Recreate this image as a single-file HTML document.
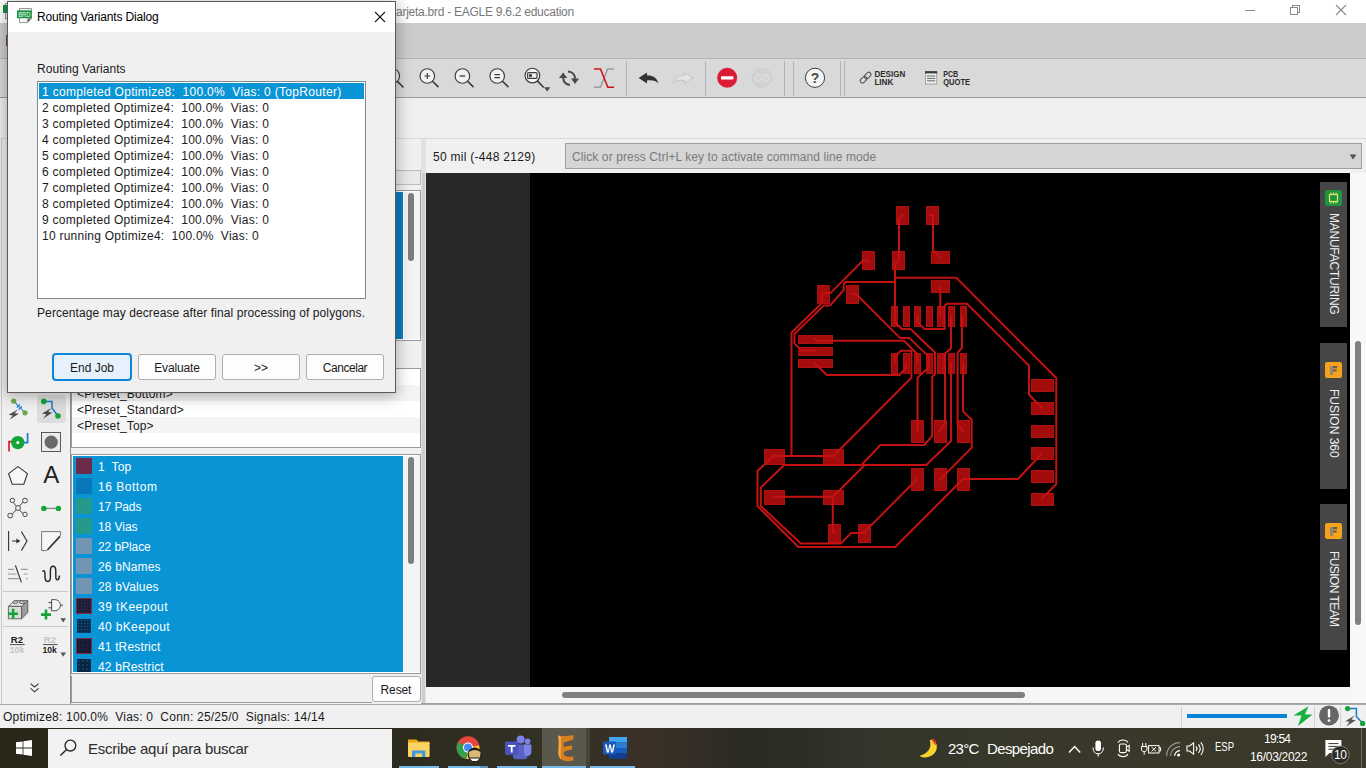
<!DOCTYPE html>
<html>
<head>
<meta charset="utf-8">
<title>EAGLE</title>
<style>
*{box-sizing:border-box;margin:0;padding:0}
html,body{width:1366px;height:768px;overflow:hidden;background:#f0f0f0;font-family:"Liberation Sans",sans-serif;font-size:12px;color:#000}
.abs{position:absolute}
.t{position:absolute;white-space:pre;line-height:1}
#titlebar{left:0;top:0;width:1366px;height:23px;background:#fff}
#menubar{left:0;top:23px;width:1366px;height:36px;background:#cccccc;border-bottom:1px solid #b4b4b4}
#toolbar{left:0;top:59px;width:1366px;height:39px;background:#d9d9d9;border-bottom:1px solid #9a9a9a}
#parambar{left:0;top:98px;width:1366px;height:41px;background:#efefef;border-bottom:1px solid #dadada}
#canvas{left:426px;top:173px;width:924px;height:514px;background:#000}
#canvasgray{left:426px;top:173px;width:104px;height:514px;background:#282828}
#statusbar{left:0;top:704px;width:1366px;height:24px;background:#f0f0f0;border-top:1px solid #a8a8a8}
#taskbar{left:0;top:728px;width:1366px;height:40px;background:linear-gradient(90deg,#2a2618 0px,#2d2b1e 400px,#333024 540px,#3a3027 640px,#362e26 690px,#2b2b23 740px,#2c2d24 800px,#33352a 860px,#37372a 1000px,#3a3829 1200px,#3b392b 1366px)}
.vt{transform-origin:0 0;transform:rotate(90deg);font-size:12px;color:#f0f0f0}
.btn{top:362px;text-align:center;font-size:12px;color:#1a1a1a}
.sep{position:absolute;top:65px;width:1px;height:28px;background:#b9b9b9}
</style>
</head>
<body>
<!-- MAIN WINDOW -->
<div id="titlebar" class="abs"></div>
<div id="menubar" class="abs"></div>
<div id="toolbar" class="abs"></div>
<div id="parambar" class="abs"></div>
<div id="canvas" class="abs"></div>
<div id="canvasgray" class="abs"></div>
<div id="statusbar" class="abs"></div>
<div id="taskbar" class="abs"></div>
<!-- title text + window controls -->
<div class="t" style="left:396px;top:6px;font-size:12px;letter-spacing:-0.26px;color:#787878">arjeta.brd - EAGLE 9.6.2 education</div>
<svg class="abs" style="left:0;top:0" width="1366" height="140" viewBox="0 0 1366 140">
 <!-- window controls -->
 <g stroke="#8a8a8a" stroke-width="1" fill="none" shape-rendering="crispEdges">
  <line x1="1245" y1="10.5" x2="1255" y2="10.5"/>
  <rect x="1290.5" y="7.5" width="7" height="7"/>
  <path d="M1292.5 7.5V5.5H1299.5V12.5H1297.5"/>
 </g>
 <g stroke="#8a8a8a" stroke-width="1.1" fill="none">
  <path d="M1336 5L1346 15M1346 5L1336 15"/>
 </g>
 <!-- toolbar separators -->
 <g stroke="#b4b4b4" stroke-width="1" shape-rendering="crispEdges">
  <line x1="626.5" y1="61" x2="626.5" y2="96"/>
  <line x1="705.5" y1="61" x2="705.5" y2="96"/>
  <line x1="784.5" y1="61" x2="784.5" y2="96"/>
  <line x1="793.5" y1="61" x2="793.5" y2="96"/>
  <line x1="840.5" y1="61" x2="840.5" y2="96"/>
  <line x1="844.5" y1="61" x2="844.5" y2="96"/>
 </g>
 <!-- magnifiers -->
 <g stroke="#3c3c3c" fill="none" stroke-linecap="round">
  <circle cx="392" cy="76" r="7.5" stroke-width="1.15" fill="#f2f2f2"/>
  <line x1="397.5" y1="81.5" x2="403" y2="87" stroke-width="1.7"/>
  <circle cx="392" cy="76" r="3" stroke-width="1.6"/>
  <circle cx="427.3" cy="76" r="7.3" stroke-width="1.15" fill="#f2f2f2"/>
  <line x1="432.8" y1="81.5" x2="438" y2="86.7" stroke-width="1.7"/>
  <path d="M424.4 76H430.2M427.3 73.1V78.9" stroke-width="1.2" stroke-linecap="butt"/>
  <circle cx="462.4" cy="76" r="7.3" stroke-width="1.15" fill="#f2f2f2"/>
  <line x1="467.9" y1="81.5" x2="473" y2="86.7" stroke-width="1.7"/>
  <path d="M459.6 76H465.2" stroke-width="1.3" stroke-linecap="butt"/>
  <circle cx="497.2" cy="76" r="7.3" stroke-width="1.15" fill="#f2f2f2"/>
  <line x1="502.7" y1="81.5" x2="508" y2="86.7" stroke-width="1.7"/>
  <path d="M494.4 74.6H500M494.4 77.6H500" stroke-width="1.1" stroke-linecap="butt"/>
  <circle cx="532.4" cy="75.6" r="7.3" stroke-width="1.15" fill="#f2f2f2"/>
  <line x1="537.6" y1="81.2" x2="543.2" y2="87" stroke-width="1.7"/>
  <rect x="527.6" y="72.6" width="9.4" height="5.8" rx="1" stroke-width="1.2"/>
  <rect x="529" y="74.2" width="3" height="2.6" fill="#3c3c3c" stroke="none"/>
 </g>
 <path d="M544 87.3H550.4L547.2 91.6Z" fill="#4a4a4a"/>
 <!-- redraw -->
 <g stroke="#484848" stroke-width="2" fill="none">
  <path d="M563.3 77.6C563 81.8 566 84.8 570 85"/>
  <path d="M568 71.4C572.2 71.6 575 74.6 575 78.8"/>
 </g>
 <path d="M559 77.9L563.2 72.5L567.2 77.9Z" fill="#484848"/>
 <path d="M571 78.6H579L575 84Z" fill="#484848"/>
 <!-- X ratsnest icon -->
 <g fill="none" stroke-width="1.6">
  <path d="M594 87.3H600.5L607.6 69H614" stroke="#9c9c9c"/>
  <path d="M594 69H600.5L607.8 87.3H614" stroke="#d41018"/>
 </g>
 <!-- undo / redo -->
 <path d="M638.6 78L647 72.4V75.6C653 75.4 657 78 658.4 83.6C656 80.6 652.6 79.8 647 80.4V83.6Z" fill="#333"/>
 <path d="M692.8 78L684.4 72.4V75.6C678.4 75.4 674.4 78 673 83.6C675.4 80.6 678.8 79.8 684.4 80.4V83.6Z" fill="#e4e4e4" stroke="#bdbdbd" stroke-width="0.8"/>
 <!-- stop -->
 <circle cx="727.2" cy="77.8" r="10" fill="#dc1c36"/>
 <rect x="721" y="76.2" width="12.4" height="3.2" rx="0.6" fill="#fff"/>
 <!-- GO -->
 <circle cx="762" cy="77.8" r="9.8" fill="#d2d2d2" stroke="#cacaca" stroke-width="0.6"/>
 <text x="762" y="81.6" font-family="Liberation Sans" font-size="10" font-weight="bold" fill="#dedede" text-anchor="middle">GO</text>
 <!-- help -->
 <circle cx="815" cy="77.8" r="9.6" fill="#f4f4f4" stroke="#3c3c3c" stroke-width="1"/>
 <text x="815" y="83" font-family="Liberation Sans" font-size="14" font-weight="bold" fill="#4a4a4a" text-anchor="middle">?</text>
 <!-- design link -->
 <g stroke="#5a5a5a" stroke-width="1.1" fill="none">
  <rect x="-3.8" y="-2.2" width="7.4" height="4.4" rx="2.2" transform="translate(863.6 79.6) rotate(-45)"/>
  <rect x="-3.6" y="-2.2" width="7.4" height="4.4" rx="2.2" transform="translate(867.6 75.6) rotate(-45)"/>
 </g>
 <g font-family="Liberation Sans" font-size="8.6" font-weight="bold" fill="#2c2c2c">
  <text x="874.4" y="77.4" textLength="31" lengthAdjust="spacingAndGlyphs">DESIGN</text>
  <text x="874.4" y="85" textLength="19" lengthAdjust="spacingAndGlyphs">LINK</text>
  <text x="943.2" y="77.4" textLength="15" lengthAdjust="spacingAndGlyphs">PCB</text>
  <text x="943.2" y="85" textLength="27" lengthAdjust="spacingAndGlyphs">QUOTE</text>
 </g>
 <!-- pcb quote icon -->
 <rect x="925.4" y="71.6" width="11.4" height="12.4" fill="#ececec" stroke="#8a8a8a" stroke-width="0.7"/>
 <rect x="925" y="71.2" width="12.2" height="2.2" fill="#3c3c3c"/>
 <g stroke="#5a5a5a" stroke-width="0.9"><path d="M927 76H935.2M927 78.4H935.2M927 80.8H935.2"/></g>
</svg>
<!-- coordinate display + command line -->
<div class="t" style="left:433px;top:151px;font-size:12px;letter-spacing:0.28px;color:#1a1a1a">50 mil (-448 2129)</div>
<div class="abs" style="left:565px;top:143px;width:797px;height:26px;background:#d5d5d5;border:1px solid #9f9f9f"></div>
<div class="t" style="left:572px;top:151px;font-size:12px;letter-spacing:0.09px;color:#7a7a7a">Click or press Ctrl+L key to activate command line mode</div>
<svg class="abs" style="left:1349px;top:154px" width="8" height="6"><path d="M0.5 0.5H7.5L4 5.5Z" fill="#555"/></svg>
<!-- LEFT TOOLBAR -->
<div class="abs" style="left:0;top:139px;width:70px;height:565px;background:#f0f0f0"></div>
<div class="abs" style="left:1px;top:139px;width:1px;height:565px;background:#c9c9c9"></div>
<div class="abs" style="left:37px;top:395px;width:29px;height:28px;background:#dcdcdc;border-radius:3px"></div>
<svg class="abs" style="left:0;top:390px" width="72" height="320" viewBox="0 390 72 320">
 <!-- row1 col1 -->
 <line x1="13.7" y1="401" x2="25" y2="412.8" stroke="#3f8fd8" stroke-width="1.2"/>
 <circle cx="13.7" cy="401" r="2.6" fill="#6aa84f"/><circle cx="25" cy="412.8" r="2.6" fill="#6aa84f"/>
 <path d="M16.8 407.6L20 404.4M18.8 409.6L22 406.4" stroke="#1c78d0" stroke-width="1.3"/>
 <path d="M17.8 409.4L8.6 414.8L12.8 415.4L9.4 419.8L18.8 413.8L14.6 413.2Z" fill="#4a4a4a"/>
 <!-- row1 col2 -->
 <path d="M43.8 401.4H52V408L58 416" stroke="#1c78d0" stroke-width="1.5" fill="none"/>
 <circle cx="43.8" cy="401.4" r="2.8" fill="#12a538"/><circle cx="58" cy="416" r="2.8" fill="#12a538"/>
 <path d="M51.4 408L42 413.6L46.4 414.2L43 418.8L52.4 412.6L48.2 412Z" fill="#4a4a4a"/>
 <!-- row2 col1 -->
 <path d="M9 451.5V441.6H13" stroke="#d2222a" stroke-width="1.7" fill="none"/>
 <path d="M27.6 433V442.6H23" stroke="#1c78d0" stroke-width="1.7" fill="none"/>
 <circle cx="17.8" cy="442.6" r="6.7" fill="#12a538"/><circle cx="17.8" cy="442.6" r="1.5" fill="#fff"/>
 <!-- row2 col2 -->
 <rect x="41.5" y="432.5" width="19" height="19" fill="#ececec" stroke="#4a4a4a" stroke-width="0.9"/>
 <circle cx="51.2" cy="442.2" r="6.6" fill="#6a6a6a"/>
 <!-- row3 -->
 <path d="M18 466.6L27.4 473.6L23.8 484.2H12.2L8.6 473.6Z" fill="#f8f8f8" stroke="#333" stroke-width="1.1"/>
 <text x="51.2" y="483.4" font-family="Liberation Sans" font-size="24" fill="#222" text-anchor="middle">A</text>
 <!-- row4 -->
 <g stroke="#4a4a4a" stroke-width="1" fill="#f4f4f4">
  <path d="M12 501L24 515M24 501L10.6 516"/>
  <circle cx="12.4" cy="500.4" r="2.2"/><circle cx="25" cy="500.6" r="2.4"/><circle cx="10.2" cy="515.6" r="2.4"/><circle cx="25" cy="514.4" r="2.2"/><circle cx="18" cy="508" r="2.4"/>
 </g>
 <line x1="43.8" y1="508.4" x2="58.4" y2="508.4" stroke="#8a8a8a" stroke-width="1.4"/>
 <circle cx="43.8" cy="508.4" r="2.7" fill="#12a538"/><circle cx="58.4" cy="508.4" r="2.7" fill="#12a538"/>
 <!-- row5 -->
 <g stroke="#333" stroke-width="1.1" fill="none">
  <path d="M8.6 531V551M12 541H19M21.4 531.6L27 541L21.4 550.6"/>
  <path d="M41.6 531.6H60.6V535L46.6 550.6H41.6Z" fill="#f6f6f6" stroke="#6a6a6a" stroke-width="0.9"/>
  <path d="M47.4 550L60 536.4" stroke-width="1.6"/>
 </g>
 <path d="M16.4 538.4L20.4 541L16.4 543.6Z" fill="#333"/>
 <!-- row6 -->
 <g stroke="#9a9a9a" stroke-width="1.1"><path d="M8 569.4H14M8 574H16.6M8 578.6H19M21 569.4H27.6M23.6 574H27.6M26 578.6H27.6"/></g>
 <path d="M15.4 565.4L21.4 582.4" stroke="#333" stroke-width="1.2"/>
 <path d="M42.6 571.6C43.4 570 45 570.6 45 573.4V577C45 583 50.4 583 50.4 577V571C50.4 564.6 55.8 564.6 55.8 571V577C55.8 581 59 581 59.4 575.6" stroke="#222" stroke-width="1.4" fill="none"/>
 <!-- separators -->
 <line x1="3" y1="591.5" x2="68" y2="591.5" stroke="#c8c8c8"/><line x1="3" y1="626.5" x2="68" y2="626.5" stroke="#c8c8c8"/>
 <!-- row7 col1: brick -->
 <g stroke="#5a5a5a" stroke-width="0.9">
  <path d="M8.4 606.4L14.6 600.6H27.8L21.6 606.4Z" fill="#e4e4e4"/>
  <path d="M8.4 606.4H21.6V618.8H8.4Z" fill="#dadada"/>
  <path d="M21.6 606.4L27.8 600.6V612.6L21.6 618.8Z" fill="#9c9c9c"/>
  <ellipse cx="15.4" cy="602.2" rx="2.6" ry="1.4" fill="#cfcfcf"/><ellipse cx="22" cy="602.2" rx="2.6" ry="1.4" fill="#cfcfcf"/>
 </g>
 <path d="M8.2 613.8H18M13.1 608.8V618.6" stroke="#12a538" stroke-width="2.6"/>
 <!-- row7 col2: gate -->
 <g stroke="#4a4a4a" stroke-width="1" fill="#f6f6f6">
  <path d="M51.6 599.6H54.4C58.8 599.6 60.4 603 60.4 605.2C60.4 607.6 58.8 610.8 54.4 610.8H51.6Z"/>
  <path d="M48.4 602.6H51.6M48.4 607.8H51.6M60.4 605.2H63"/>
 </g>
 <path d="M41 614.6H51M46 609.6V619.6" stroke="#12a538" stroke-width="2.6"/>
 <path d="M60.4 618.2H66L63.2 622.4Z" fill="#555"/>
 <!-- row8 -->
 <g font-family="Liberation Sans" font-weight="bold" text-anchor="middle">
  <text x="17" y="643" font-size="9.6" fill="#222">R2</text>
  <text x="17" y="652.6" font-size="8.6" fill="#c4c4c4">10k</text>
  <text x="50" y="643" font-size="9.6" fill="#c4c4c4">R2</text>
  <text x="49.6" y="652.6" font-size="8.6" fill="#222">10k</text>
 </g>
 <line x1="10" y1="644.6" x2="24.6" y2="644.6" stroke="#222" stroke-width="0.8"/>
 <line x1="43" y1="644.6" x2="57.6" y2="644.6" stroke="#222" stroke-width="0.8"/>
 <path d="M60.4 652.6H66L63.2 656.8Z" fill="#555"/>
 <!-- chevron -->
 <path d="M30.6 683.6L34.6 687L38.6 683.6M30.6 688.4L34.6 691.8L38.6 688.4" stroke="#333" stroke-width="1.1" fill="none"/>
</svg>
<!-- LEFT PANEL -->
<div class="abs" style="left:70px;top:139px;width:1px;height:565px;background:#8e8e8e"></div>
<div class="abs" style="left:71px;top:139px;width:350px;height:565px;background:#f0f0f0"></div>
<div class="abs" style="left:421px;top:139px;width:5px;height:565px;background:#e2e2e2"></div>
<div class="abs" style="left:422px;top:173px;width:3px;height:531px;background:#cdcdcd"></div>
<!-- hidden-behind panel pieces -->
<div class="abs" style="left:71px;top:170px;width:350px;height:15px;background:#e9e9e9;border:1px solid #bcbcbc"></div>
<div class="abs" style="left:71px;top:190px;width:350px;height:151px;background:#fff;border:1px solid #9a9a9a"></div>
<div class="abs" style="left:73px;top:192px;width:330px;height:147px;background:#0b7fc0"></div>
<div class="abs" style="left:404px;top:192px;width:16px;height:147px;background:#f4f4f4"></div>
<div class="abs" style="left:408px;top:193px;width:6px;height:68px;background:#7e7e7e;border-radius:3px"></div>
<div class="abs" style="left:71px;top:368px;width:350px;height:80px;background:#fff;border:1px solid #9a9a9a"></div>
<!-- preset list -->
<div class="abs" style="left:72px;top:385px;width:348px;height:16px;background:#f4f4f4"></div>
<div class="abs" style="left:72px;top:417px;width:348px;height:16px;background:#f4f4f4"></div>
<div class="t" style="left:77px;top:388px;font-size:12px;letter-spacing:0.17px;color:#1a1a1a">&lt;Preset_Bottom&gt;</div>
<div class="t" style="left:77px;top:404px;font-size:12px;letter-spacing:0.17px;color:#1a1a1a">&lt;Preset_Standard&gt;</div>
<div class="t" style="left:77px;top:420px;font-size:12px;letter-spacing:0.17px;color:#1a1a1a">&lt;Preset_Top&gt;</div>
<!-- layer list -->
<div class="abs" style="left:71px;top:454px;width:350px;height:220px;background:#fff;border:1px solid #9a9a9a"></div>
<div class="abs" style="left:404px;top:456px;width:16px;height:216px;background:#f4f4f4"></div>
<div class="abs" style="left:408px;top:457px;width:6px;height:107px;background:#7e7e7e;border-radius:3px"></div>
<div id="layers" class="abs" style="left:73px;top:456px;width:330px;height:216px;background:#0994d6;overflow:hidden">
<div class="abs" style="left:3px;top:2px;width:16px;height:16px;background:#6e2a48"></div><div class="t" style="left:25px;top:5px;font-size:12px;letter-spacing:0.15px;color:#fff">1  Top</div>
<div class="abs" style="left:3px;top:22px;width:16px;height:16px;background:#0878ba"></div><div class="t" style="left:25px;top:25px;font-size:12px;letter-spacing:0.53px;color:#fff">16 Bottom</div>
<div class="abs" style="left:3px;top:42px;width:16px;height:16px;background:#24998c"></div><div class="t" style="left:25px;top:45px;font-size:12px;letter-spacing:-0.1px;color:#fff">17 Pads</div>
<div class="abs" style="left:3px;top:62px;width:16px;height:16px;background:#24998c"></div><div class="t" style="left:25px;top:65px;font-size:12px;letter-spacing:-0.05px;color:#fff">18 Vias</div>
<div class="abs" style="left:3px;top:82px;width:16px;height:16px;background:#7394b4"></div><div class="t" style="left:25px;top:85px;font-size:12px;letter-spacing:-0.08px;color:#fff">22 bPlace</div>
<div class="abs" style="left:3px;top:102px;width:16px;height:16px;background:#7394b4"></div><div class="t" style="left:25px;top:105px;font-size:12px;letter-spacing:0.15px;color:#fff">26 bNames</div>
<div class="abs" style="left:3px;top:122px;width:16px;height:16px;background:#7394b4"></div><div class="t" style="left:25px;top:125px;font-size:12px;letter-spacing:0.15px;color:#fff">28 bValues</div>
<div class="abs" style="left:3px;top:142px;width:16px;height:16px;background:#181f3a;background-image:radial-gradient(circle,#5a2440 0.6px,transparent 0.9px);background-size:3px 3px;border:1px solid #7a2a44"></div><div class="t" style="left:25px;top:145px;font-size:12px;letter-spacing:0.48px;color:#fff">39 tKeepout</div>
<div class="abs" style="left:4px;top:163px;width:14px;height:14px;background:#0c2c4c;background-image:radial-gradient(circle,#0a64a4 0.7px,transparent 1px);background-size:3px 3px"></div><div class="t" style="left:25px;top:165px;font-size:12px;letter-spacing:0.35px;color:#fff">40 bKeepout</div>
<div class="abs" style="left:3px;top:182px;width:16px;height:16px;background:#161c36;background-image:radial-gradient(circle,#4a2038 0.5px,transparent 0.8px);background-size:4px 4px;border:1px solid #7a2a44"></div><div class="t" style="left:25px;top:185px;font-size:12px;letter-spacing:0.15px;color:#fff">41 tRestrict</div>
<div class="abs" style="left:4px;top:203px;width:14px;height:14px;background:#0a2440;background-image:radial-gradient(circle,#0a4c84 0.6px,transparent 0.9px);background-size:4px 4px"></div><div class="t" style="left:25px;top:205px;font-size:12px;letter-spacing:0.15px;color:#fff">42 bRestrict</div>
</div>
<!-- reset -->
<div class="abs" style="left:71px;top:676px;width:301px;height:27px;background:#f0f0f0;border-left:1px solid #9a9a9a;border-bottom:1px solid #9a9a9a"></div>
<div class="abs" style="left:372px;top:676px;width:49px;height:26px;background:#fdfdfd;border:1px solid #adadad;border-radius:3px"></div>
<div class="t" style="left:380.5px;top:684px;font-size:12px;letter-spacing:-0.1px;color:#1a1a1a">Reset</div>
<!-- CANVAS PCB -->
<svg class="abs" style="left:0;top:0" width="1366" height="768" viewBox="0 0 1366 768">
<g fill="#a20c0c" stroke="#b20f0f" stroke-width="1" shape-rendering="crispEdges">
<rect x="896.5" y="206.5" width="12" height="18"/><rect x="926.5" y="206.5" width="12" height="18"/><rect x="862.5" y="251.5" width="12" height="18"/><rect x="892.5" y="251.5" width="12" height="18"/><rect x="931.5" y="251.5" width="18" height="12"/><rect x="931.5" y="280.5" width="18" height="12"/><rect x="817.5" y="285.5" width="12" height="18"/><rect x="846.5" y="285.5" width="12" height="18"/><rect x="798.5" y="335.5" width="34" height="8"/><rect x="798.5" y="347.5" width="34" height="8"/><rect x="798.5" y="359.5" width="34" height="8"/><rect x="1031.5" y="379.5" width="22" height="12"/><rect x="1031.5" y="402.5" width="22" height="12"/><rect x="1031.5" y="425.5" width="22" height="12"/><rect x="1031.5" y="447.5" width="22" height="12"/><rect x="1031.5" y="470.5" width="22" height="12"/><rect x="1031.5" y="493.5" width="22" height="12"/><rect x="764.5" y="449.5" width="20" height="15"/><rect x="823.5" y="449.5" width="20" height="15"/><rect x="764.5" y="490.5" width="20" height="14"/><rect x="823.5" y="490.5" width="20" height="14"/><rect x="911.5" y="420.5" width="12" height="22"/><rect x="934.5" y="420.5" width="12" height="22"/><rect x="957.5" y="420.5" width="12" height="22"/><rect x="911.5" y="468.5" width="12" height="22"/><rect x="934.5" y="468.5" width="12" height="22"/><rect x="957.5" y="468.5" width="12" height="22"/><rect x="828.5" y="524.5" width="12" height="18"/><rect x="858.5" y="524.5" width="12" height="18"/><rect x="891.5" y="306.5" width="6" height="20"/><rect x="891.5" y="353.5" width="6" height="20"/><rect x="903.5" y="306.5" width="6" height="20"/><rect x="903.5" y="353.5" width="6" height="20"/><rect x="914.5" y="306.5" width="6" height="20"/><rect x="914.5" y="353.5" width="6" height="20"/><rect x="926.5" y="306.5" width="6" height="20"/><rect x="926.5" y="353.5" width="6" height="20"/><rect x="937.5" y="306.5" width="6" height="20"/><rect x="937.5" y="353.5" width="6" height="20"/><rect x="948.5" y="306.5" width="6" height="20"/><rect x="948.5" y="353.5" width="6" height="20"/><rect x="960.5" y="306.5" width="6" height="20"/><rect x="960.5" y="353.5" width="6" height="20"/>
</g>
<g fill="none" stroke="#c41212" stroke-width="2" stroke-linejoin="round" stroke-linecap="round">
<path d="M902.5,215 L899,218.5 V260 L895,264 V322 L901.7,329 H910.5 L935,352.5 V374 L932.2,376.8 V436 L924.2,445 H880.4 L861.5,465"/>
<path d="M864.8,465 L833,496.8"/>
<path d="M929.5,215 H933 V250 L940.3,257.5"/>
<path d="M868.8,261 L863.5,260 L830.5,293.1 H823.5 L821.7,295 V303.2 L791.5,332.5 V456"/>
<path d="M773.4,456 H833.5"/>
<path d="M773.4,456 L757.5,471 V506 L798.4,547 H895.2 L962.8,479.3"/>
<path d="M962.8,479 H1018 L1042.3,453"/>
<path d="M895,281.9 H845.6 L843.7,284 V290 L830,305.6 H823.7 L794.4,334 V343.4 L801.7,350.6 H816"/>
<path d="M895,277.7 H956.3 L1056.3,378 V484 L1042,498.5"/>
<path d="M940.3,286.5 V316"/>
<path d="M917.5,316 V322 L924.5,329 H944.6 V306 L947,303.7 H967 L1029,365.7 V394.5 L1042.3,408.5"/>
<path d="M851.5,293.4 L857.4,295.2 L899.9,337.9 H909.3 L928.6,356.6 V367.2 L917.5,377.7 V431"/>
<path d="M814.4,338.4 L816.9,340.8 H904 L917.5,354.3 V363.6"/>
<path d="M814.3,362.6 L826.8,375 H899.4 L905.8,368 V362.5"/>
<path d="M951,316 V348.4 L945,353.5 V423.4 L939.5,431"/>
<path d="M962,316 V347.8 L957.6,352.5 V425 L962.8,431"/>
<path d="M894.7,362.5 V356.6 L901,350.8 H910.7 L911.4,351.5 V377.7 L833.5,456"/>
<path d="M951,362.5 V441 L926.3,465 H784.2 L760.8,487.6 V506 L800.9,543.4 H841 L851,533.1 H863.5 L916.9,479.2"/>
<path d="M963,362.5 V411.4 L971.7,419.7 V447.6 L940.3,479.3"/>
<path d="M773.4,496.8 H832.8 V531 L834.5,533"/>
</g>
</svg>
<!-- right scrollbar strip -->
<div class="abs" style="left:1350px;top:173px;width:16px;height:530px;background:#f8f8f8"></div>
<div class="abs" style="left:1355px;top:341px;width:6px;height:284px;background:#808080;border-radius:3px"></div>
<!-- bottom scrollbar -->
<div class="abs" style="left:426px;top:687px;width:924px;height:16px;background:#f6f6f6"></div>
<div class="abs" style="left:562px;top:692px;width:463px;height:6px;background:#808080;border-radius:3px"></div>
<div class="abs" style="left:421px;top:703px;width:945px;height:1px;background:#a0a0a0"></div>
<!-- side tabs -->
<div class="abs" style="left:1320px;top:182px;width:27px;height:145px;background:#464646"></div>
<div class="abs" style="left:1320px;top:343px;width:27px;height:146px;background:#464646"></div>
<div class="abs" style="left:1320px;top:504px;width:27px;height:146px;background:#464646"></div>
<div class="abs" style="left:1325px;top:190px;width:17px;height:16px;background:#1e9640;border-radius:2px"></div>
<svg class="abs" style="left:1325px;top:190px" width="17" height="16"><rect x="4.5" y="4.5" width="8" height="7" fill="none" stroke="#e8e070" stroke-width="1.2"/><path d="M6 2.5V4M8.5 2.5V4M11 2.5V4M6 12V13.5M8.5 12V13.5M11 12V13.5" stroke="#e8e070" stroke-width="1"/></svg>
<div class="abs" style="left:1325px;top:362px;width:17px;height:16px;background:#f5a21c;border-radius:2px"></div>
<div class="abs" style="left:1325px;top:523px;width:17px;height:16px;background:#f5a21c;border-radius:2px"></div>
<svg class="abs" style="left:1325px;top:362px" width="17" height="16"><path d="M5.5 12.5V4H12.2V6.2H8V7.6H11.6V9.6H8V12.5Z" fill="#6a5a4a"/><path d="M5.5 12.5V4H8V12.5Z" fill="#8a8a8a"/></svg>
<svg class="abs" style="left:1325px;top:523px" width="17" height="16"><path d="M5.5 12.5V4H12.2V6.2H8V7.6H11.6V9.6H8V12.5Z" fill="#6a5a4a"/><path d="M5.5 12.5V4H8V12.5Z" fill="#8a8a8a"/></svg>
<div class="t vt" style="left:1339.5px;top:213px;letter-spacing:-0.25px">MANUFACTURING</div>
<div class="t vt" style="left:1339.5px;top:388.5px;letter-spacing:0px">FUSION 360</div>
<div class="t vt" style="left:1339.5px;top:550.5px;letter-spacing:-0.57px">FUSION TEAM</div>
<!-- STATUS BAR -->
<div class="t" style="left:3px;top:711px;font-size:12px;letter-spacing:0.22px;color:#1a1a1a">Optimize8: 100.0%  Vias: 0  Conn: 25/25/0  Signals: 14/14</div>
<div class="abs" style="left:1181px;top:707px;width:1px;height:20px;background:#d0d0d0"></div>
<div class="abs" style="left:1187px;top:714px;width:100px;height:4px;background:#0a84d8"></div>
<div class="abs" style="left:1314px;top:707px;width:1px;height:20px;background:#d0d0d0"></div>
<div class="abs" style="left:1340px;top:707px;width:1px;height:20px;background:#d0d0d0"></div>
<svg class="abs" style="left:1290px;top:704px" width="76" height="24" viewBox="1290 704 76 24">
 <path d="M1308.6 706.2L1293.4 715.4H1301.6L1298 726L1312.6 714.6H1304.8Z" fill="#12b03c"/>
 <circle cx="1329" cy="715.4" r="10" fill="#666"/>
 <rect x="1327.8" y="709" width="2.4" height="8.6" rx="1" fill="#fff"/><circle cx="1329" cy="720.6" r="1.4" fill="#fff"/>
 <path d="M1347.6 708.6H1356.4V716.4L1362.4 723" stroke="#1c78d0" stroke-width="1.5" fill="none"/>
 <circle cx="1347.6" cy="708.6" r="2.6" fill="#12a538"/><circle cx="1362.6" cy="723.4" r="2.6" fill="#12a538"/>
 <path d="M1354.6 715.6L1345.2 721.2L1349.6 721.8L1346.2 726.6L1355.8 720.2L1351.4 719.6Z" fill="#555"/>
</svg>
<!-- TASKBAR -->
<svg class="abs" style="left:16px;top:740px" width="16" height="16" viewBox="0 0 16 16"><path d="M0 2.3L6.6 1.4V7.6H0ZM7.4 1.3L16 0V7.6H7.4ZM0 8.4H6.6V14.6L0 13.7ZM7.4 8.4H16V16L7.4 14.7Z" fill="#fff"/></svg>
<div class="abs" style="left:48px;top:729px;width:344px;height:39px;background:#f2f2f2"></div>
<svg class="abs" style="left:58px;top:738px" width="20" height="20" viewBox="0 0 20 20"><circle cx="12.4" cy="7.6" r="5.4" fill="none" stroke="#222" stroke-width="1.3"/><path d="M8.6 11.4L2.4 17.6" stroke="#222" stroke-width="1.4"/></svg>
<div class="t" style="left:88px;top:741px;font-size:15px;letter-spacing:-0.27px;color:#2b2b2b">Escribe aquí para buscar</div>
<div class="abs" style="left:542px;top:728px;width:48px;height:40px;background:#5a584c"></div>
<div class="abs" style="left:586px;top:728px;width:4px;height:40px;background:#46443a"></div>
<!-- underlines -->
<div class="abs" style="left:399px;top:766px;width:40px;height:2px;background:#76b9ed"></div>
<div class="abs" style="left:448px;top:766px;width:32px;height:2px;background:#76b9ed"></div>
<div class="abs" style="left:480px;top:766px;width:8px;height:2px;background:#5d93bd"></div>
<div class="abs" style="left:497px;top:766px;width:40px;height:2px;background:#76b9ed"></div>
<div class="abs" style="left:542px;top:766px;width:44px;height:2px;background:#76b9ed"></div>
<div class="abs" style="left:590px;top:766px;width:45px;height:2px;background:#76b9ed"></div>
<!-- app icons -->
<svg class="abs" style="left:400px;top:732px" width="240" height="34" viewBox="400 732 240 34">
 <!-- folder -->
 <path d="M408 739.6H416.4L418.4 741.6H429.6V744H408Z" fill="#e8a818"/>
 <rect x="408" y="742.4" width="21.6" height="14.6" rx="1" fill="#fcd462"/>
 <path d="M412 757V750.6H425.4V757H422V753.6H415.4V757Z" fill="#3e9be0"/>
 <!-- chrome -->
 <circle cx="468" cy="747.6" r="11.4" fill="#e8453c"/>
 <path d="M468 747.6L458.2 742A11.4 11.4 0 0 0 466.6 759Z" fill="#2fa24f"/>
 <path d="M468 747.6L466.6 759A11.4 11.4 0 0 0 479.2 745.6Z" fill="#fcc934"/>
 <circle cx="468" cy="747.6" r="5" fill="#fff"/><circle cx="468" cy="747.6" r="4" fill="#4a8af4"/>
 <circle cx="474.6" cy="754.6" r="7" fill="#1a1a14"/>
 <path d="M468.6 752.6C471 749.4 477.6 749 480.6 752.4L480 757.6H469.4Z" fill="#d8b878"/>
 <path d="M469.6 758.6H479.6L477 761H472.4Z" fill="#f4f4f4"/>
 <!-- teams -->
 <circle cx="520.6" cy="739.6" r="4" fill="#7b83eb"/><circle cx="527.6" cy="741.4" r="2.8" fill="#7b83eb"/>
 <rect x="513" y="744.6" width="14.4" height="14.6" rx="3" fill="#5a62c4"/>
 <path d="M524 744.6H531.4V752.6A4 4 0 0 1 524 754Z" fill="#7b83eb"/>
 <rect x="505" y="741.6" width="13.4" height="13.4" rx="1.4" fill="#4b53bc"/>
 <path d="M508 745H515.4V746.8H512.6V752.6H510.8V746.8H508Z" fill="#fff"/>
 <!-- eagle E -->
 <path d="M558 735.6C562 736.6 568.6 736 573.4 735V739.4C569.4 741 565.4 741.6 563.6 742.6V747C566 746.4 569.6 745.6 572 745.6V749.6C569 750.2 565.6 751 563.6 752.4C563.4 755.6 566 757.4 573.4 756.6V760.4C564.6 762.6 558.6 760 558.4 753.6C558.2 747.6 559.6 741.6 558 735.6Z" fill="#d87e1c"/>
 <path d="M558 735.6C559.6 741.6 558.2 747.6 558.4 753.6C558.5 756 559.4 758 561 759.4C560.4 753 561.6 743 560.6 736.2Z" fill="#f0a848"/>
 <!-- word -->
 <rect x="609" y="737" width="18" height="5.6" fill="#41a5ee"/><rect x="609" y="742.6" width="18" height="5.4" fill="#2b7cd3"/><rect x="609" y="748" width="18" height="5.4" fill="#185abd"/><rect x="609" y="753.4" width="18" height="5.4" fill="#103f91"/>
 <rect x="603" y="741.6" width="13" height="13" rx="1" fill="#185abd"/>
 <path d="M605 744.6H606.8L608 751L609.2 744.6H610.8L612 751L613.2 744.6H615L613 752.4H611L609.9 746.6L608.8 752.4H606.8Z" fill="#fff"/>
</svg>
<!-- tray -->
<svg class="abs" style="left:915px;top:730px" width="330" height="36" viewBox="915 730 330 36">
 <!-- moon -->
 <path d="M933 739C940 745 937.6 756 925.6 757.4C921.6 757.8 919.6 755.8 919.6 755.8C928 753.6 932.4 747.6 929.6 740.6Z" fill="#f8d32c"/>
 <path d="M933 738.8C935.4 739.6 936.6 742.6 935.4 745.6C934.6 743.4 933.4 741.6 931.6 740.4Z" fill="#e8302c"/>
 <!-- chevron -->
 <path d="M1069 752.6L1074.6 746.6L1080.2 752.6" stroke="#fff" stroke-width="1.4" fill="none"/>
 <!-- mic -->
 <rect x="1095.4" y="740.4" width="5.6" height="10.6" rx="2.8" fill="#fff"/>
 <path d="M1093 747.4C1093 756 1103.4 756 1103.4 747.4M1098.2 753.8V756.6" stroke="#fff" stroke-width="1.1" fill="none"/>
 <!-- meet now -->
 <g stroke="#fff" stroke-width="1.1" fill="none"><rect x="1119.4" y="744" width="7" height="8.6" rx="1.6"/><path d="M1126.4 747L1129.2 745.4V751.2L1126.4 749.6M1118 742.6C1119 740.6 1121 740 1123 740C1125 740 1127 740.6 1128 742.6M1118 754C1119 756 1121 756.6 1123 756.6C1125 756.6 1127 756 1128 754"/></g>
 <!-- battery -->
 <g stroke="#fff" stroke-width="1" fill="none"><path d="M1142.6 743V746.6M1145.8 743V746.6M1141.4 746.6H1147V749C1147 751 1145.6 751.6 1144.2 751.6C1142.8 751.6 1141.4 751 1141.4 749ZM1144.2 751.6V754.6"/><rect x="1148.6" y="745.6" width="10.4" height="7.4"/><path d="M1159 747.6H1160.6V751H1159M1151.6 747.2L1156 751.4M1156 747.2L1151.6 751.4"/></g>
 <!-- wifi -->
 <g stroke="#9a9a90" stroke-width="1.2" fill="none"><path d="M1166.6 756C1166.6 749 1172 742.6 1180 742.6"/><path d="M1170.6 756C1170.6 751 1174.6 746.6 1180 746.6"/><path d="M1174.6 756C1174.6 753.4 1176.6 750.6 1180 750.6" stroke="#fff"/></g>
 <circle cx="1178.6" cy="755" r="1.5" fill="#fff"/>
 <!-- volume -->
 <g stroke="#fff" stroke-width="1.1" fill="none"><path d="M1187 746H1189.6L1193.6 742.8V754.2L1189.6 751H1187Z"/><path d="M1196 746.4C1197.2 747.8 1197.2 749.6 1196 751M1198.4 744.4C1200.6 747 1200.6 750.4 1198.4 753M1200.8 742.4C1204 746 1204 751.4 1200.8 755"/></g>
 <!-- notification -->
</svg>
<div class="t" style="left:948px;top:741px;font-size:15px;letter-spacing:-0.75px;color:#fff">23°C</div><div class="t" style="left:987px;top:741px;font-size:15px;letter-spacing:-0.62px;color:#fff">Despejado</div>
<div class="t" style="left:1215px;top:741px;font-size:12.5px;transform:scaleX(0.76);transform-origin:0 0;color:#fff">ESP</div>
<div class="t" style="left:1264px;top:733px;font-size:12px;letter-spacing:-0.75px;color:#fff">19:54</div>
<div class="t" style="left:1250px;top:751px;font-size:12px;letter-spacing:-0.3px;color:#fff">16/03/2022</div>
<svg class="abs" style="left:1320px;top:736px" width="36" height="30" viewBox="1320 736 36 30">
 <path d="M1325.4 740H1341.4V753H1329.6L1325.4 757Z" fill="#fff"/>
 <path d="M1328.4 743.6H1338.4M1328.4 746.4H1338.4M1328.4 749.2H1335" stroke="#3a382c" stroke-width="1"/>
 <circle cx="1340.4" cy="754.8" r="8.8" fill="#2a2a26" stroke="#8a8a84" stroke-width="0.8"/>
 <text x="1340.2" y="759" font-family="Liberation Sans" font-size="12" fill="#fff" text-anchor="middle" letter-spacing="-0.6">10</text>
</svg>
<div class="abs" style="left:1361px;top:728px;width:1px;height:40px;background:#6a685e"></div>
<!-- DIALOG -->
<div class="abs" style="left:5px;top:3px;width:4px;height:16px;background:#f4f4f4;border:1px solid #9a9a9a"></div><div class="abs" style="left:3px;top:5px;width:6px;height:8px;background:#12923c"></div><div class="abs" style="left:6px;top:35px;width:2px;height:11px;background:#7a4040"></div>
<div id="dlg" class="abs" style="left:7px;top:1px;width:389px;height:392px;background:#f0f0f0;border:1px solid #5a5a5a;box-shadow:0 2px 14px 1px rgba(0,0,0,0.30)">
 <div class="abs" style="left:0;top:0;width:387px;height:30px;background:#fff"></div>
</div>
<svg class="abs" style="left:16px;top:7px" width="18" height="18" viewBox="16 7 18 18">
 <path d="M19.5 8.5H31.5V18.6L27.4 22.6H19.5Z" fill="#f4f4f4" stroke="#8a8a8a" stroke-width="0.9"/>
 <path d="M31.5 18.6H27.4V22.6Z" fill="#6a6a6a"/>
 <rect x="17" y="10.4" width="14.6" height="7.8" fill="#12923c"/>
 <text x="24.3" y="17" font-family="Liberation Sans" font-size="6.4" fill="#fff" text-anchor="middle" textLength="12" lengthAdjust="spacingAndGlyphs">BRD</text>
</svg>
<div class="t" style="left:37px;top:11px;font-size:12px;letter-spacing:-0.16px;color:#000">Routing Variants Dialog</div>
<svg class="abs" style="left:372px;top:9px" width="16" height="16"><path d="M3 3L13 13M13 3L3 13" stroke="#1a1a1a" stroke-width="1.1"/></svg>
<div class="t" style="left:37px;top:63px;font-size:12px;letter-spacing:0.05px;color:#1a1a1a">Routing Variants</div>
<div class="abs" style="left:37px;top:81px;width:329px;height:218px;background:#fff;border:1px solid #828790"></div>
<div class="abs" style="left:39px;top:83px;width:325px;height:16px;background:#0994d6"></div>
<div id="rows">
<div class="t" style="left:42px;top:86px;font-size:12px;letter-spacing:0.32px;color:#fff">1 completed Optimize8:  100.0%  Vias: 0 (TopRouter)</div>
<div class="t" style="left:42px;top:102px;font-size:12px;letter-spacing:0.27px;color:#1a1a1a">2 completed Optimize4:  100.0%  Vias: 0</div>
<div class="t" style="left:42px;top:118px;font-size:12px;letter-spacing:0.27px;color:#1a1a1a">3 completed Optimize4:  100.0%  Vias: 0</div>
<div class="t" style="left:42px;top:134px;font-size:12px;letter-spacing:0.27px;color:#1a1a1a">4 completed Optimize4:  100.0%  Vias: 0</div>
<div class="t" style="left:42px;top:150px;font-size:12px;letter-spacing:0.27px;color:#1a1a1a">5 completed Optimize4:  100.0%  Vias: 0</div>
<div class="t" style="left:42px;top:166px;font-size:12px;letter-spacing:0.27px;color:#1a1a1a">6 completed Optimize4:  100.0%  Vias: 0</div>
<div class="t" style="left:42px;top:182px;font-size:12px;letter-spacing:0.27px;color:#1a1a1a">7 completed Optimize4:  100.0%  Vias: 0</div>
<div class="t" style="left:42px;top:198px;font-size:12px;letter-spacing:0.27px;color:#1a1a1a">8 completed Optimize4:  100.0%  Vias: 0</div>
<div class="t" style="left:42px;top:214px;font-size:12px;letter-spacing:0.27px;color:#1a1a1a">9 completed Optimize4:  100.0%  Vias: 0</div>
<div class="t" style="left:42px;top:230px;font-size:12px;letter-spacing:0.24px;color:#1a1a1a">10 running Optimize4:  100.0%  Vias: 0</div>
</div>
<div class="t" style="left:37px;top:307px;font-size:12px;letter-spacing:0.1px;color:#1a1a1a">Percentage may decrease after final processing of polygons.</div>
<div class="abs" style="left:52px;top:353px;width:80px;height:28px;background:#e5f1fb;border:2px solid #0b86d9;border-radius:4px"></div>
<div class="abs" style="left:138px;top:354px;width:78px;height:26px;background:#fdfdfd;border:1px solid #adadad;border-radius:3px"></div>
<div class="abs" style="left:222px;top:354px;width:78px;height:26px;background:#fdfdfd;border:1px solid #adadad;border-radius:3px"></div>
<div class="abs" style="left:306px;top:354px;width:78px;height:26px;background:#fdfdfd;border:1px solid #adadad;border-radius:3px"></div>
<div class="t btn" style="left:52px;width:80px">End Job</div>
<div class="t btn" style="left:138px;width:78px;letter-spacing:-0.15px">Evaluate</div>
<div class="t btn" style="left:222px;width:78px">&gt;&gt;</div>
<div class="t btn" style="left:306px;width:78px;letter-spacing:-0.47px">Cancelar</div>

</body>
</html>
